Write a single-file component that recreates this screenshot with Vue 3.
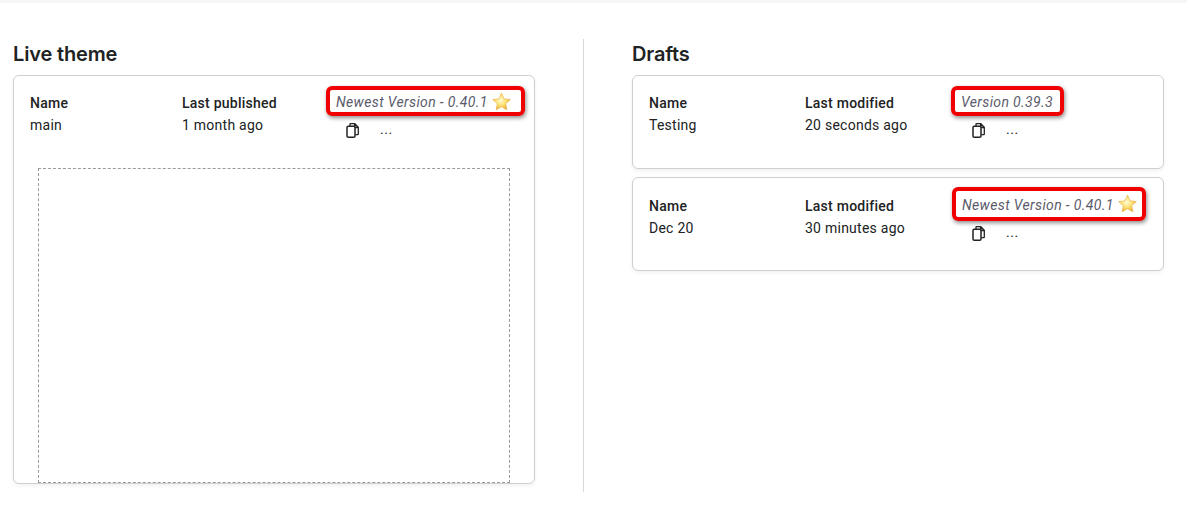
<script setup>
const live = { name: 'main', label: 'Last published', when: '1 month ago', version: 'Newest Version - 0.40.1', star: true }
const drafts = [
  { name: 'Testing', label: 'Last modified', when: '20 seconds ago', version: 'Version 0.39.3', star: false },
  { name: 'Dec 20', label: 'Last modified', when: '30 minutes ago', version: 'Newest Version - 0.40.1', star: true }
]
</script>

<template>
  <div class="page">
    <div class="strip"></div>
    <div class="columns">
      <section class="left">
        <h2>Live theme</h2>
        <div class="card live">
          <div class="row live-row">
            <div class="cell"><b>Name</b><span>{{ live.name }}</span></div>
            <div class="cell"><b>{{ live.label }}</b><span>{{ live.when }}</span></div>
            <div class="meta">
              <div class="tag">
                <i>{{ live.version }}</i>
                <svg class="star" viewBox="0 0 20 20" width="19" height="19"><defs><radialGradient id="s1" cx=".45" cy=".42" r=".62"><stop offset="0" stop-color="#fffbd8"/><stop offset=".5" stop-color="#fde272"/><stop offset="1" stop-color="#eea22a"/></radialGradient></defs><path d="M10 1.2l2.7 6 6.6.8-4.9 4.3 1.3 6.5L10 15.4l-5.7 3.4 1.3-6.5L.7 8l6.6-.8z" fill="url(#s1)" stroke="#e8b048" stroke-width=".7" stroke-linejoin="round"/></svg>
              </div>
              <div class="actions">
                <svg class="copy" viewBox="0 0 13 15" width="13" height="15"><path d="M4 3V1.2a.5.5 0 0 1 .5-.5h4.3l3.5 3.5v6.9a.6.6 0 0 1-.6.6H9.4M8.6.9v3.6h3.6" fill="none" stroke="#202223" stroke-width="1.3"/><rect x="1" y="3.2" width="8" height="11" rx="1.3" fill="#fff" stroke="#202223" stroke-width="1.5"/></svg>
                <span class="dots">...</span>
              </div>
            </div>
          </div>
          <div class="preview"></div>
        </div>
      </section>
      <div class="divider"></div>
      <section class="right">
        <h2>Drafts</h2>
        <div class="stack">
          <div v-for="d in drafts" :key="d.name" class="card draft">
            <div class="row draft-row" :class="{ newest: d.star }">
              <div class="cell"><b>Name</b><span>{{ d.name }}</span></div>
              <div class="cell"><b>{{ d.label }}</b><span>{{ d.when }}</span></div>
              <div class="meta">
                <div class="tag">
                  <i>{{ d.version }}</i>
                  <svg v-if="d.star" class="star" viewBox="0 0 20 20" width="19" height="19"><path d="M10 1.2l2.7 6 6.6.8-4.9 4.3 1.3 6.5L10 15.4l-5.7 3.4 1.3-6.5L.7 8l6.6-.8z" fill="url(#s1)" stroke="#e8b048" stroke-width=".7" stroke-linejoin="round"/></svg>
                </div>
                <div class="actions">
                  <svg class="copy" viewBox="0 0 13 15" width="13" height="15"><path d="M4 3V1.2a.5.5 0 0 1 .5-.5h4.3l3.5 3.5v6.9a.6.6 0 0 1-.6.6H9.4M8.6.9v3.6h3.6" fill="none" stroke="#202223" stroke-width="1.3"/><rect x="1" y="3.2" width="8" height="11" rx="1.3" fill="#fff" stroke="#202223" stroke-width="1.5"/></svg>
                  <span class="dots">...</span>
                </div>
              </div>
            </div>
          </div>
        </div>
      </section>
    </div>
  </div>
</template>

<style>
html, body { background: #fff; }
</style>

<style scoped>
.page { width: 1187px; height: 516px; background: #fff; overflow: hidden; font-family: Roboto, sans-serif; color: #202223; }
.strip { height: 3px; background: #f6f6f7; }
.columns { display: flex; padding: 36px 23px 0 13px; }
.left { width: 522px; }
.right { width: 532px; }
.divider { width: 1px; height: 453px; margin: 0 48px; background: #d9d9d9; }
h2 { margin: 2px 0 0; height: 34px; font: 600 20px/26px Inter, sans-serif; letter-spacing: -.15px; color: #202223; }
.card { box-sizing: border-box; background: #fff; border: 1px solid #cfcfcf; border-radius: 6px; box-shadow: 0 2px 4px rgba(0,0,0,.06); }
.live { height: 409px; overflow: hidden; }
.draft { height: 94px; }
.stack { display: flex; flex-direction: column; gap: 8px; }
.row { display: grid; padding: 10px 0 0 16px; }
.live-row { grid-template-columns: 152px 144px 1fr; }
.draft-row { grid-template-columns: 156px 145px 1fr; }
.cell { display: flex; flex-direction: column; font-size: 14px; line-height: 22px; padding-top: 6px; letter-spacing: .25px; }
.cell b { font-weight: 500; }
.meta { display: flex; flex-direction: column; align-items: flex-start; }
.tag { box-sizing: border-box; display: inline-flex; align-items: center; height: 30px; padding: 2px 7px 0 6px; border: 4px solid #f00000; border-radius: 6px; box-shadow: 1px 2px 4px rgba(0,0,0,.45); font-size: 14px; color: #5b5b6b; letter-spacing: .37px; white-space: nowrap; }
.tag i { font-style: italic; }
.star { margin: -2px 3px 0 4px; }
.actions { display: flex; align-items: center; gap: 21px; padding: 7px 0 0 20px; }
.copy { display: block; }
.dots { font-size: 14px; line-height: 12px; margin-top: -4px; letter-spacing: .6px; }
.draft-row .meta { margin-left: 1px; }
.draft-row .actions { padding-left: 21px; }
.newest .cell { padding-top: 7px; }
.newest .meta { margin-left: 2px; }
.newest .tag { height: 34px; margin-top: -1px; padding-top: 1px; padding-right: 2px; }
.newest .actions { padding-top: 5px; padding-left: 20px; }
.preview { box-sizing: border-box; width: 472px; height: 315px; margin: 30px 0 0 24px; border: 1px dashed #9a9a9a; }
</style>
